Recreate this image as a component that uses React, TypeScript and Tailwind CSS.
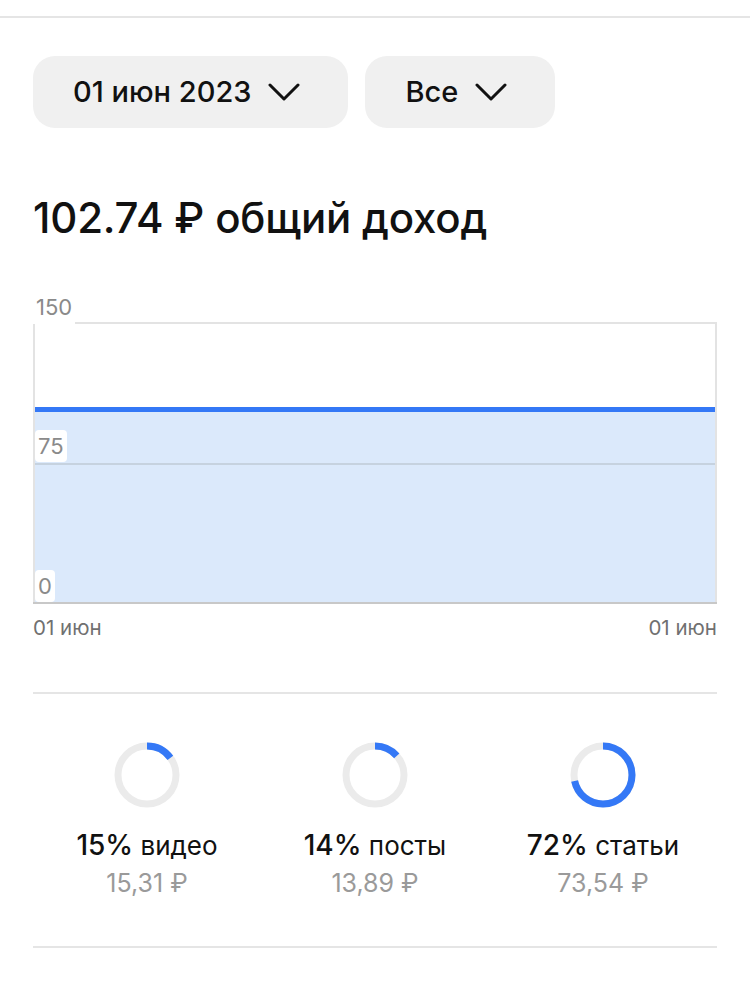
import React from "react";

const SHARES = [
  { pct: 15, label: "видео", amount: "15,31 ₽", frac: 0.149 },
  { pct: 14, label: "посты", amount: "13,89 ₽", frac: 0.135 },
  { pct: 72, label: "статьи", amount: "73,54 ₽", frac: 0.716 },
];

function Chevron() {
  return (
    <svg width="32" height="18" viewBox="0 0 32 18" fill="none">
      <path d="M2 2 L16 16 L30 2" stroke="#111" strokeWidth="3" strokeLinecap="round" strokeLinejoin="round" />
    </svg>
  );
}

function Donut({ frac }: { frac: number }) {
  const r = 29;
  const c = 2 * Math.PI * r;
  return (
    <svg width="66" height="66" viewBox="0 0 66 66">
      <circle cx="33" cy="33" r={r} fill="none" stroke="#ebebeb" strokeWidth="7" />
      <circle
        cx="33"
        cy="33"
        r={r}
        fill="none"
        stroke="#3478f6"
        strokeWidth="7"
        strokeDasharray={`${c * frac} ${c}`}
        transform="rotate(-90 33 33)"
      />
    </svg>
  );
}

export default function App() {
  return (
    <div className="w-[750px] min-h-[1004px] bg-white font-['Inter',sans-serif] text-[#111]">
      <div className="h-[18px] border-b-2 border-[#e5e5e5]" />

      <div className="px-[33px]">
        {/* filters */}
        <div className="flex gap-[17px] mt-[38px]">
          <button className="h-[72px] rounded-[22px] bg-[#f0f0f0] pl-[40px] pr-[48px] flex items-center gap-[17px] text-[29px] font-medium">
            <span>01 июн 2023</span>
            <Chevron />
          </button>
          <button className="h-[72px] rounded-[22px] bg-[#f0f0f0] pl-[40px] pr-[48px] flex items-center gap-[17px] text-[29px] font-medium">
            <span>Все</span>
            <Chevron />
          </button>
        </div>

        <h1 className="mt-[65px] text-[42px] leading-[50px] font-medium tracking-[-0.2px]">102.74 ₽ общий доход</h1>

        {/* chart */}
        <div className="mt-[48px] relative h-[311px]">
          <div className="absolute left-0 right-0 top-[31px] h-[280px] border-t-2 border-l-2 border-r-2 border-[#e3e3e3]">
            <div className="absolute left-0 right-0 bottom-0 h-[192px] bg-[#dbe9fb]" />
            <div className="absolute left-0 right-0 bottom-[190px] h-[5px] bg-[#3478f6]" />
            <div className="absolute left-0 right-0 bottom-[137px] h-[2px] bg-[#c6d2df]" />
            <div className="absolute left-[-2px] right-[-2px] bottom-[-2px] h-[2px] bg-[#c8c8c8]" />
            <span className="absolute left-0 bottom-[140px] px-[3px] bg-white rounded-[4px] text-[22px] leading-[32px] text-[#8a8a8a]">75</span>
            <span className="absolute left-0 bottom-0 px-[3px] bg-white rounded-[4px] text-[22px] leading-[32px] text-[#8a8a8a]">0</span>
          </div>
          <span className="absolute left-0 top-0 px-[3px] bg-white text-[22px] leading-[33px] text-[#8a8a8a]">150</span>
        </div>

        <div className="flex justify-between mt-[14px] text-[20.5px] leading-[24px] text-[#707070]">
          <span>01 июн</span>
          <span>01 июн</span>
        </div>

        <div className="mt-[52px] h-[2px] bg-[#e5e5e5]" />

        {/* shares */}
        <div className="grid grid-cols-3 pt-[48px] pb-[48px]">
          {SHARES.map((s) => (
            <div key={s.label} className="flex flex-col items-center">
              <Donut frac={s.frac} />
              <div className="mt-[20px] text-[26px] leading-[34px]">
                <span className="text-[28px] font-medium">{s.pct}%</span> {s.label}
              </div>
              <div className="mt-[5px] text-[25px] leading-[30px] text-[#9a9a9a]">{s.amount}</div>
            </div>
          ))}
        </div>

        <div className="h-[2px] bg-[#e5e5e5]" />
      </div>
    </div>
  );
}
